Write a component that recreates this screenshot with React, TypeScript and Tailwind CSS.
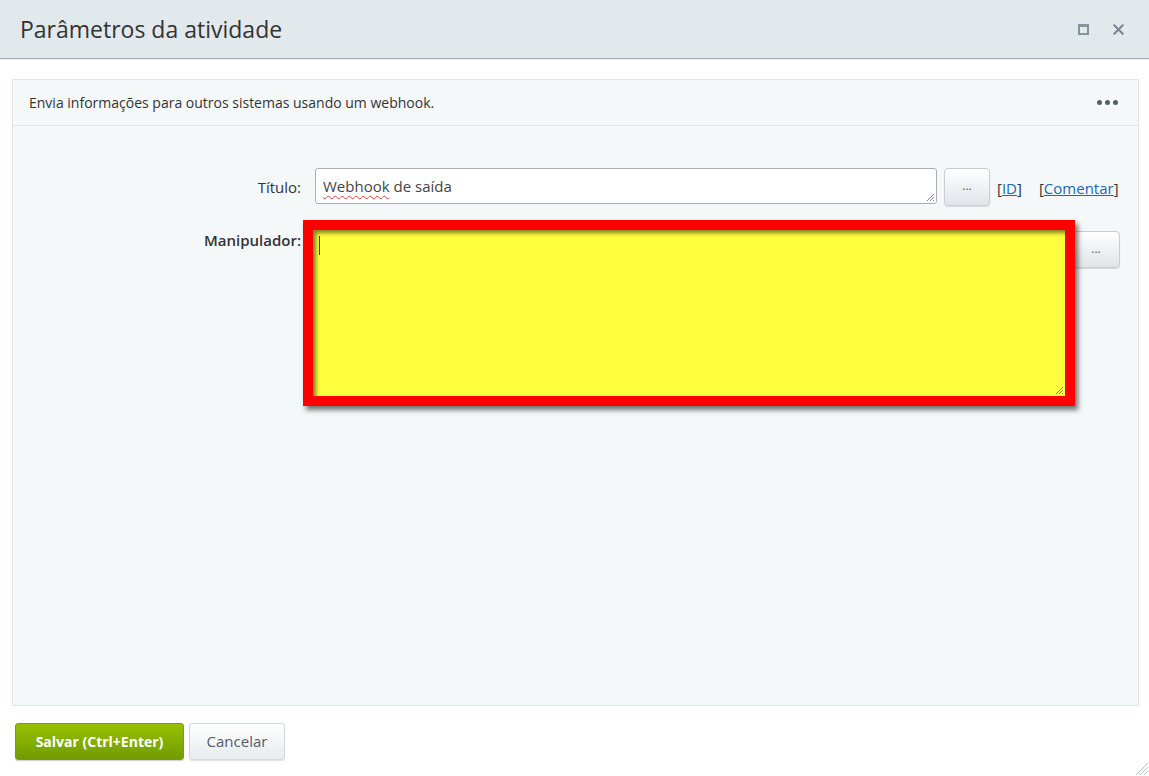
import { X } from "lucide-react";

const DotsButton = ({ className = "" }: { className?: string }) => (
  <button
    type="button"
    className={`flex items-start justify-center rounded-[4px] border border-[#c6cdd3] bg-gradient-to-b from-white to-[#dfe5e8] pt-[11px] text-[12px] leading-none text-[#535c69] shadow-[0_1px_1px_rgba(0,0,0,0.12)] ${className}`}
  >
    ...
  </button>
);

const Grip = ({ className = "" }: { className?: string }) => (
  <svg width="10" height="10" viewBox="0 0 10 10" className={className}>
    <path d="M9 2 L2 9 M9 5 L5 9 M9 8 L8 9" stroke="#666" strokeWidth="0.8" />
  </svg>
);

const App = () => {
  return (
    <div className="relative flex h-[776px] w-[1149px] flex-col overflow-hidden bg-white font-['Open_Sans',sans-serif] text-[#333]">
      {/* header */}
      <div className="flex h-[59px] shrink-0 items-center border-b border-[#a7adb1] bg-[#e2e9ec] pl-[20px] pr-[22px] shadow-[0_1px_0_#eef1f2]">
        <h1 className="flex-1 text-[23px] font-normal text-[#333]">Parâmetros da atividade</h1>
        <div className="flex items-center gap-[21px] text-[#7b8893]">
          <span className="block h-[11px] w-[11px] border-2 border-t-[3px] border-[#8593a0]" />
          <X size={17} strokeWidth={3} className="text-[#7b8893]" />
        </div>
      </div>

      {/* panel */}
      <div className="ml-[12px] mr-[10px] mt-[20px] flex h-[627px] flex-col border border-[#dfe6ea] bg-[#f5f8f9]">
        <div className="flex h-[46px] shrink-0 items-center border-b border-[#dfe6ea] pl-[16px] pr-[20px]">
          <p className="flex-1 text-[14px] text-[#333]">
            Envia informações para outros sistemas usando um webhook.
          </p>
          <div className="flex gap-[3px]">
            <span className="h-[5px] w-[5px] rounded-full bg-[#535c69]" />
            <span className="h-[5px] w-[5px] rounded-full bg-[#535c69]" />
            <span className="h-[5px] w-[5px] rounded-full bg-[#535c69]" />
          </div>
        </div>

        <div className="flex flex-col pt-[42px]">
          {/* título */}
          <div className="flex items-start">
            <label className="w-[288px] pt-[8px] text-right text-[15px] text-[#333]">Título:</label>
            <div className="relative ml-[14px] h-[36px] w-[622px] rounded-[3px] border border-[#a8b0b6] bg-white px-[7px] pt-[6px] text-[15px] text-[#444]">
              <span className="underline decoration-[#e53a3a] decoration-wavy decoration-1 underline-offset-[3px]">
                Webhook
              </span>{" "}
              de saída
              <Grip className="absolute bottom-[1px] right-[1px]" />
            </div>
            <DotsButton className="ml-[7px] h-[38px] w-[46px]" />
            <span className="ml-[7px] pt-[9px] text-[15px] text-[#333]">
              [<a href="#" className="text-[#2067b0] underline">ID</a>]
            </span>
            <span className="ml-[17px] pt-[9px] text-[15px] text-[#333]">
              [<a href="#" className="text-[#2067b0] underline">Comentar</a>]
            </span>
          </div>

          {/* manipulador */}
          <div className="mt-[14px] flex items-start">
            <label className="w-[288px] pt-[9px] text-right text-[15px] font-semibold text-[#333]">
              Manipulador:
            </label>
            <div className="relative z-10 ml-[2px] bg-[#ff0000] p-[10px] shadow-[3px_4px_5px_rgba(0,0,0,0.55)]">
              <div className="relative h-[166px] w-[752px] bg-[#ffff3e] shadow-[inset_3px_3px_4px_rgba(0,0,0,0.5)]">
                <span className="absolute left-[6px] top-[6px] h-[19px] w-[1px] bg-[#333]" />
                <Grip className="absolute bottom-[1px] right-[1px]" />
              </div>
            </div>
            <DotsButton className="-ml-[3px] mt-[11px] h-[37px] w-[48px]" />
          </div>
        </div>
      </div>

      {/* footer */}
      <div className="ml-[15px] mt-[17px] flex gap-[5px]">
        <button
          type="button"
          className="h-[37px] w-[169px] rounded-[3px] border border-[#7a9d00] bg-gradient-to-b from-[#97c000] to-[#719c00] text-[14px] font-bold text-white shadow-[0_1px_1px_rgba(0,0,0,0.2)]"
        >
          Salvar (Ctrl+Enter)
        </button>
        <button
          type="button"
          className="h-[37px] w-[96px] rounded-[3px] border border-[#d2d8dc] bg-gradient-to-b from-white to-[#e6ebed] text-[15px] text-[#535c69] shadow-[0_1px_1px_rgba(0,0,0,0.12)]"
        >
          Cancelar
        </button>
      </div>

      <svg width="14" height="14" viewBox="0 0 14 14" className="absolute bottom-0 right-0">
        <path d="M13 1 L1 13 M13 5 L5 13 M13 9 L9 13" stroke="#b8bec3" strokeWidth="1" />
      </svg>
    </div>
  );
};

export default App;
